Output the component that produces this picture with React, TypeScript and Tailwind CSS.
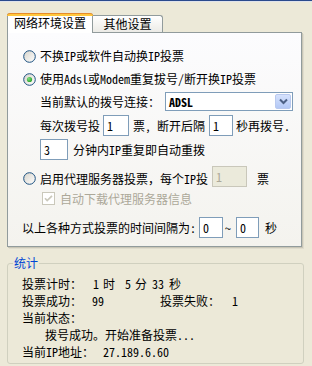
import React from "react";

function Radio({ checked }: { checked?: boolean }) {
  return (
    <svg width="13" height="13" viewBox="0 0 13 13" className="shrink-0">
      <defs>
        <linearGradient id="rg" x1="0" y1="0" x2="1" y2="1">
          <stop offset="0" stopColor="#d6d3ca" />
          <stop offset="1" stopColor="#ffffff" />
        </linearGradient>
        <radialGradient id="dot" cx="0.35" cy="0.35" r="0.8">
          <stop offset="0" stopColor="#7fe07f" />
          <stop offset="1" stopColor="#1c9a1c" />
        </radialGradient>
      </defs>
      <circle cx="6.5" cy="6.5" r="5.8" fill="url(#rg)" stroke="#1c5180" strokeWidth="1" />
      {checked && <circle cx="6.5" cy="6.5" r="2.6" fill="url(#dot)" />}
    </svg>
  );
}

function DisabledCheck() {
  return (
    <svg width="13" height="13" viewBox="0 0 13 13" className="shrink-0">
      <rect x="0.5" y="0.5" width="12" height="12" fill="#ffffff" stroke="#cac8bb" />
      <path d="M3 6.2 L5.2 8.6 L10 3.8" fill="none" stroke="#cac8bb" strokeWidth="1.7" />
    </svg>
  );
}

export default function App() {
  return (
    <div className="w-[312px] h-[366px] bg-[#ece9d8] overflow-hidden text-[12px] leading-[14px] text-black [font-family:'Noto_Sans_Mono_CJK_SC','Noto_Sans_CJK_SC',sans-serif]">
      <div className="h-[1px] bg-[#2a4a8c]" />
      <div className="h-[1px] bg-[#dfe3ec]" />
      <div className="pl-[7px] pt-[11px]">
        {/* tabs */}
        <div className="flex items-end h-[20px] relative z-10">
          <div className="relative w-[86px] h-[20px] bg-white border-x border-[#919b9c] rounded-t-[3px] flex items-center justify-center pb-[2px]">
            <div className="absolute top-0 -left-[1px] -right-[1px] h-[3px] rounded-t-[3px] bg-[#ffc73c] border-t border-[#e68b2c]" />
            <span className="mt-[2px]">网络环境设置</span>
          </div>
          <div className="w-[70px] h-[17px] mb-[1px] border-t border-r border-[#919b9c] rounded-tr-[3px] bg-gradient-to-b from-white to-[#ecebe6] flex items-center justify-center">
            <span>其他设置</span>
          </div>
        </div>
        {/* panel */}
        <div className="-mt-[1px] w-[295px] h-[215px] border border-[#919b9c] bg-gradient-to-b from-[#fcfcfe] to-[#f4f3ee] shadow-[1px_1px_0_#c9c6b6,2px_2px_0_#dfdccd] flex flex-col pl-[14px] pt-[15px]">
          <div className="h-[16px] flex items-center">
            <div className="ml-[1px]"><Radio /></div>
            <span className="ml-[4px]">不换IP或软件自动换IP投票</span>
          </div>
          <div className="mt-[7px] h-[16px] flex items-center">
            <div className="ml-[1px]"><Radio checked /></div>
            <span className="ml-[4px]">使用Adsl或Modem重复拔号/断开换IP投票</span>
          </div>
          <div className="mt-[5px] h-[19px] flex items-center">
            <span className="ml-[18px]">当前默认的拨号连接：</span>
            <div className="ml-[5px] w-[128px] h-[19px] border border-[#7f9db9] bg-white flex items-center justify-between">
              <span className="ml-[3px] font-bold">ADSL</span>
              <div className="w-[16px] h-[15px] mr-[1px] rounded-[2px] border border-[#b9c9ef] bg-gradient-to-b from-[#d6e2fd] to-[#b3c8f5] flex items-center justify-center">
                <svg width="9" height="7" viewBox="0 0 9 7">
                  <path d="M1 1.5 L4.5 5 L8 1.5" fill="none" stroke="#4d6185" strokeWidth="2" />
                </svg>
              </div>
            </div>
          </div>
          <div className="mt-[4px] h-[21px] flex items-center">
            <span className="ml-[18px]">每次拨号投</span>
            <div className="ml-[3px] w-[26px] h-[21px] border border-[#7f9db9] bg-white flex items-center pl-[3px]">1</div>
            <span className="ml-[4px] whitespace-pre">票, 断开后隔</span>
            <div className="ml-[4px] w-[24px] h-[21px] border border-[#7f9db9] bg-white flex items-center pl-[3px]">1</div>
            <span className="ml-[3px]">秒再拨号.</span>
          </div>
          <div className="mt-[3px] h-[21px] flex items-center">
            <div className="ml-[18px] w-[28px] h-[21px] border border-[#7f9db9] bg-white flex items-center pl-[3px]">3</div>
            <span className="ml-[5px]">分钟内IP重复即自动重拨</span>
          </div>
          <div className="mt-[6px] h-[21px] flex items-center">
            <div className="ml-[1px] mt-[4px]"><Radio /></div>
            <span className="ml-[4px] mt-[4px]">启用代理服务器投票，每个IP投</span>
            <div className="ml-[4px] w-[35px] h-[21px] border border-[#c9c7ba] bg-[#ebeadb] flex items-center pl-[3px] text-[#aca899]">1</div>
            <span className="ml-[10px] mt-[4px]">票</span>
          </div>
          <div className="mt-[4px] h-[15px] flex items-center">
            <div className="ml-[20px]"><DisabledCheck /></div>
            <span className="ml-[5px] text-[#aca899]">自动下载代理服务器信息</span>
          </div>
          <div className="mt-[11px] h-[21px] flex items-center">
            <span>以上各种方式投票的时间间隔为:</span>
            <div className="ml-[3px] w-[24px] h-[21px] border border-[#7f9db9] bg-white flex items-center pl-[3px]">0</div>
            <span className="ml-[2px]">~</span>
            <div className="ml-[5px] w-[23px] h-[21px] border border-[#7f9db9] bg-white flex items-center pl-[3px]">0</div>
            <span className="ml-[6px]">秒</span>
          </div>
        </div>
        {/* group box */}
        <div className="relative mt-[16px] w-[297px] h-[101px] border border-[#d0d0bf] rounded-[3px] pl-[14px] pt-[11px] flex flex-col">
          <span className="absolute -top-[8px] left-[5px] px-[1px] bg-[#ece9d8] text-[#0046d5] h-[14px]">统计</span>
          <div className="h-[17px] flex items-center">
            <span>投票计时：</span>
            <span className="ml-[11px]">1</span>
            <span className="ml-[4px]">时</span>
            <span className="ml-[10px]">5</span>
            <span className="ml-[4px]">分</span>
            <span className="ml-[5px]">33</span>
            <span className="ml-[5px]">秒</span>
          </div>
          <div className="h-[17px] flex items-center">
            <span>投票成功：</span>
            <span className="ml-[10px]">99</span>
            <span className="ml-[56px]">投票失败：</span>
            <span className="ml-[12px]">1</span>
          </div>
          <div className="h-[17px] flex items-center">
            <span>当前状态：</span>
          </div>
          <div className="h-[17px] flex items-center">
            <span className="ml-[23px]">拨号成功。开始准备投票...</span>
          </div>
          <div className="h-[17px] flex items-center">
            <span>当前IP地址：</span>
            <span className="ml-[9px]">27.189.6.60</span>
          </div>
        </div>
      </div>
    </div>
  );
}
